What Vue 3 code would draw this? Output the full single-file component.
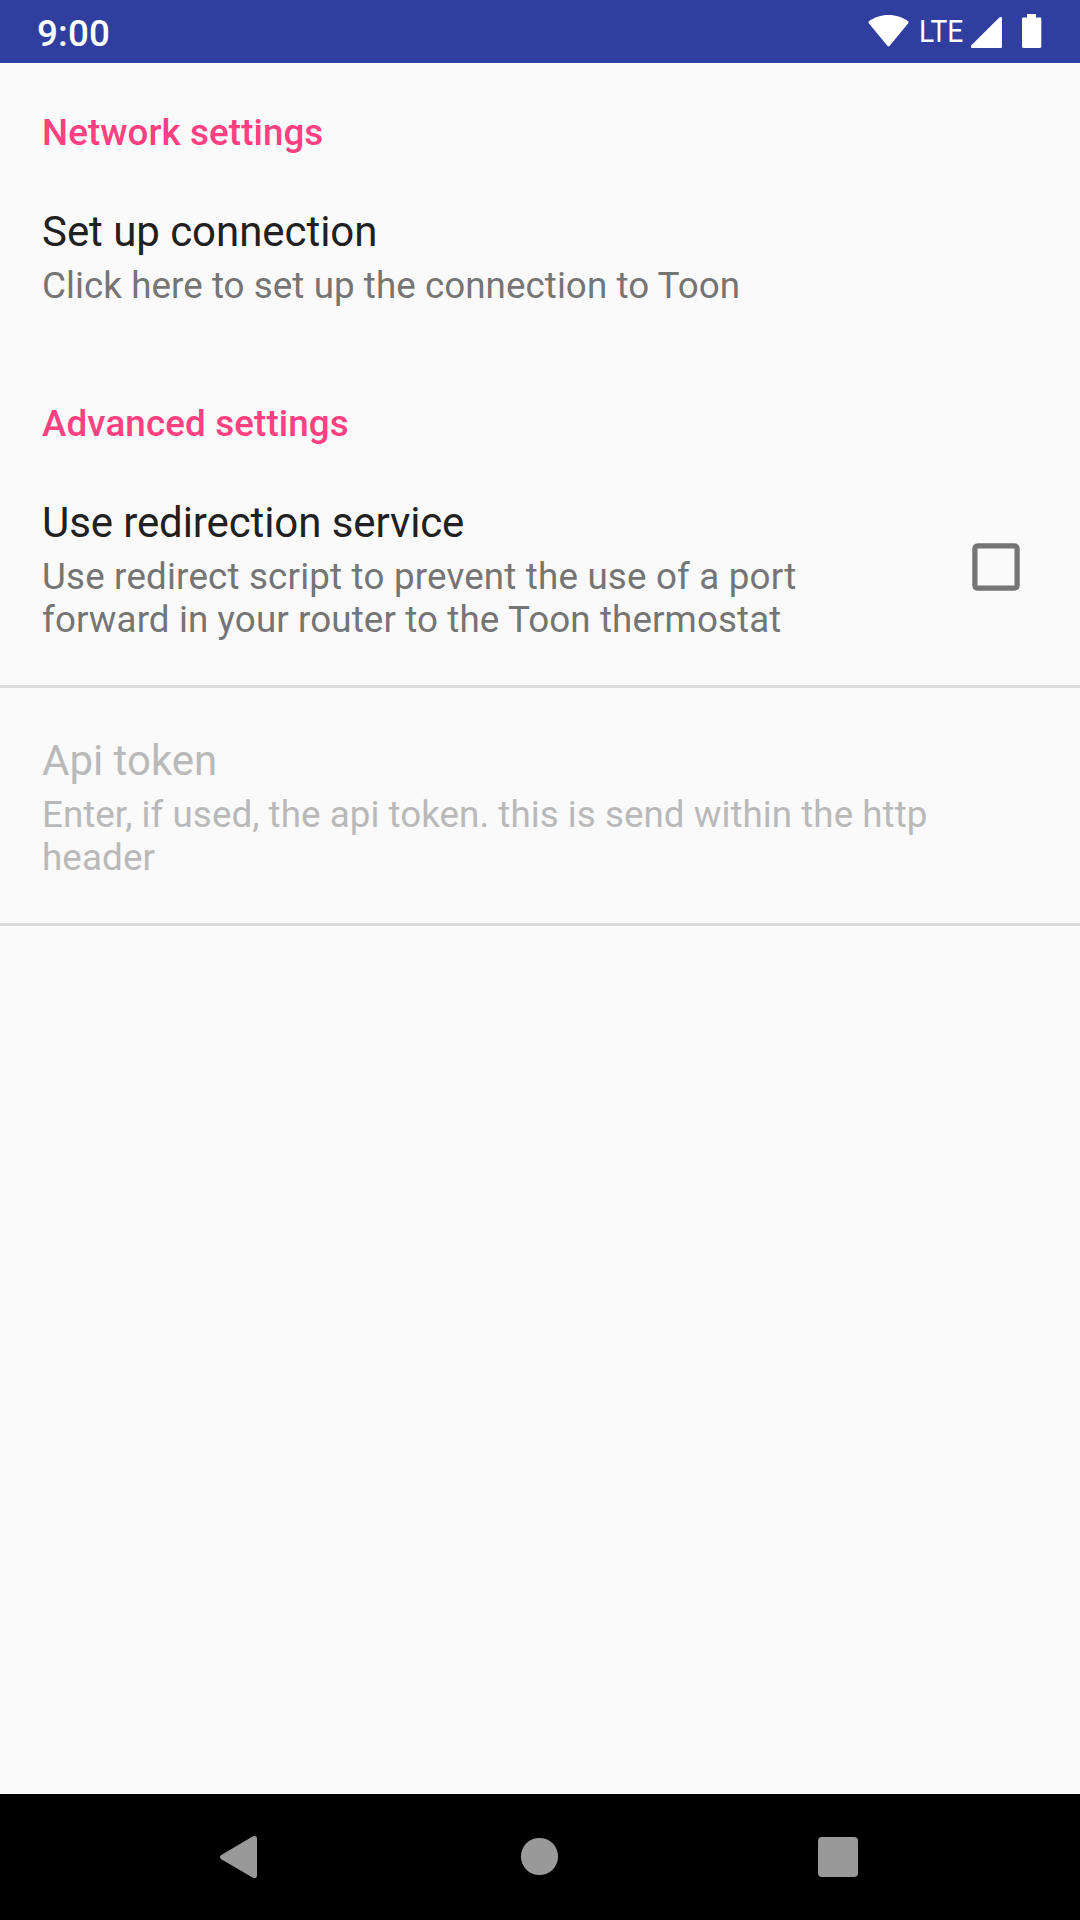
<script setup>
const sections = [
  {
    title: 'Network settings',
    tracking: 0.08,
    items: [
      {
        title: 'Set up connection',
        tracking: -0.05,
        summary: [{ text: 'Click here to set up the connection to Toon', tracking: 0.06 }],
      },
    ],
  },
  {
    title: 'Advanced settings',
    tracking: 0.13,
    items: [
      {
        title: 'Use redirection service',
        tracking: -0.1,
        summary: [
          { text: 'Use redirect script to prevent the use of a port', tracking: 0.18 },
          { text: 'forward in your router to the Toon thermostat', tracking: 0.11 },
        ],
        checkbox: true,
        divider: true,
      },
      {
        title: 'Api token',
        tracking: 0,
        summary: [
          { text: 'Enter, if used, the api token. this is send within the http', tracking: 0.045 },
          { text: 'header', tracking: 0.12 },
        ],
        disabled: true,
        divider: true,
      },
    ],
  },
]
const spacing = (value) => ({ letterSpacing: `${value}px` })
</script>

<template>
  <div class="screen">
    <header class="status">
      <span class="clock">9:00</span>
      <div class="indicators">
        <svg class="wifi" width="42" height="34" viewBox="0 0 42 34">
          <path d="M20.5 1C12.8 1 6.1 3.5 1 7.2Q0 8.2 .8 9.3L19.3 31.8Q20.5 33 21.7 31.8L40.2 9.3Q41 8.2 40 7.2C34.9 3.5 28.2 1 20.5 1Z" />
        </svg>
        <span class="lte"><span class="lte-text">LTE</span></span>
        <svg class="signal" width="31" height="31" viewBox="0 0 31 31">
          <path d="M.4 28.2L28.3 .5Q29 0 30 0Q31 0 31 1V29.8Q31 31 29.8 31H1Q0 31 0 30V29.2Q0 28.6 .4 28.2Z" />
        </svg>
        <svg class="battery" width="20" height="34" viewBox="0 0 20 34">
          <path d="M5 0H14V3.6H18Q19.3 3.6 19.3 4.9V32.6Q19.3 33.9 18 33.9H1.3Q0 33.9 0 32.6V4.9Q0 3.6 1.3 3.6H5Z" />
        </svg>
      </div>
    </header>

    <main class="settings">
      <section v-for="section in sections" :key="section.title" class="section">
        <h2 class="category" :style="spacing(section.tracking)">{{ section.title }}</h2>
        <div
          v-for="item in section.items"
          :key="item.title"
          class="item"
          :class="{ disabled: item.disabled, divided: item.divider }"
        >
          <div class="texts">
            <div class="title" :style="spacing(item.tracking)">{{ item.title }}</div>
            <div class="summary">
              <div v-for="line in item.summary" :key="line.text" :style="spacing(line.tracking)">{{ line.text }}</div>
            </div>
          </div>
          <svg v-if="item.checkbox" class="checkbox" width="48" height="48" viewBox="0 0 48 48">
            <rect x="2.9" y="2.9" width="42.2" height="42.2" rx="2.7" />
          </svg>
        </div>
      </section>
    </main>

    <nav class="navbar">
      <svg width="1080" height="126" viewBox="0 0 1080 126">
        <path d="M221.3 61L252.5 42.5Q257 40.5 257 45V81Q257 85.500 252.500 83.500L221.300 65.200Q218.500 63.100 221.300 61Z" />
        <circle cx="539.500" cy="62.500" r="18.600" />
        <rect x="818" y="43" width="40" height="40" rx="4" />
      </svg>
    </nav>
  </div>
</template>

<style>
body {
  margin: 0;
}
</style>

<style scoped>
.screen {
  width: 1080px;
  height: 1920px;
  display: flex;
  flex-direction: column;
  background: #fafafa;
  font-family: Roboto, "Liberation Sans", sans-serif;
  overflow: hidden;
}
svg {
  display: block;
  flex: none;
}
.status {
  box-sizing: border-box;
  height: 63px;
  flex: none;
  display: flex;
  justify-content: space-between;
  padding: 0 38px 0 37px;
  background: #303f9f;
  color: #fff;
}
.clock {
  font-size: 36.75px;
  font-weight: 500;
  line-height: 43px;
  letter-spacing: 0.2px;
  padding-top: 12px;
}
.indicators {
  display: flex;
  fill: #fff;
}
.wifi {
  margin-top: 14px;
}
.lte {
  width: 44px;
  margin: 12px 8px 0 9px;
}
.lte-text {
  display: block;
  font-size: 32px;
  line-height: 38px;
  transform: scaleX(0.88);
  transform-origin: 0 0;
}
.signal {
  margin: 17px 20px 0 0;
}
.battery {
  margin-top: 14px;
}
.settings {
  flex: 1;
  padding-top: 48px;
}
.section + .section {
  padding-top: 51px;
}
.category {
  margin: 0 0 5px;
  padding-left: 42px;
  font-size: 36.75px;
  font-weight: 500;
  line-height: 43px;
  color: #ff4081;
}
.item {
  display: flex;
  justify-content: space-between;
  align-items: center;
  padding: 48px 60px 44px 42px;
}
.divided {
  border-bottom: 3px solid #dcdcdc;
}
.title {
  font-size: 42px;
  line-height: 49px;
  margin-bottom: 8px;
  color: #212121;
}
.summary {
  font-size: 36.75px;
  line-height: 43px;
  color: #757575;
  white-space: nowrap;
}
.disabled .title,
.disabled .summary {
  color: #b9b9b9;
}
.checkbox {
  margin-bottom: 5px;
}
.checkbox rect {
  fill: none;
  stroke: #757575;
  stroke-width: 5.25;
}
.navbar {
  height: 126px;
  flex: none;
  background: #000;
  fill: #999;
}
</style>
